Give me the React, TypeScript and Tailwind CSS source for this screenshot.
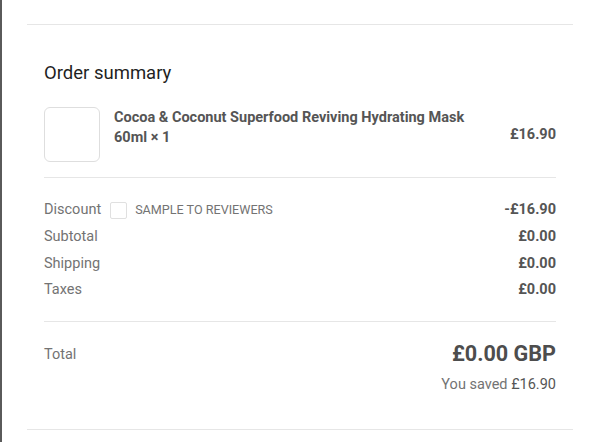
export default function App() {
  return (
    <div
      className="w-[600px] h-[442px] bg-white border-l-2 border-[#5a5a5a] overflow-hidden"
      style={{ fontFamily: "Roboto, 'Liberation Sans', sans-serif" }}
    >
      <div className="ml-[25px] mr-[27px] mt-[24px] border-t border-[#e6e6e6] border-b">
        <div className="px-[17px] pt-[36px] pb-[34px]">
          <h2 className="text-[18.5px] leading-6 text-[#1f1f1f]">Order summary</h2>

          <div className="mt-[22px] flex items-center gap-[14px] pb-[15px] border-b border-[#e6e6e6]">
            <div className="w-[56px] h-[55px] rounded-[6px] border border-[#dedede] bg-white shrink-0" />
            <div className="flex-1 self-start pt-px text-[14.5px] leading-5 font-bold text-[#555555]">
              <div>Cocoa &amp; Coconut Superfood Reviving Hydrating Mask</div>
              <div>60ml × 1</div>
            </div>
            <div className="text-[14.5px] font-bold text-[#555555]">£16.90</div>
          </div>

          <div className="pt-[22px] pb-[21px] flex flex-col gap-[6.8px] text-[14.5px] leading-5 border-b border-[#e6e6e6]">
            <div className="flex items-center">
              <span className="text-[#737373]">Discount</span>
              <span className="ml-[9px] w-[17px] h-[17px] border border-[#e0e0e0] rounded-[2px]" />
              <span className="ml-[8px] text-[12.6px] text-[#737373] uppercase">Sample to reviewers</span>
              <span className="ml-auto font-bold text-[#555555]">-£16.90</span>
            </div>
            <div className="flex">
              <span className="text-[#737373]">Subtotal</span>
              <span className="ml-auto font-bold text-[#555555]">£0.00</span>
            </div>
            <div className="flex">
              <span className="text-[#737373]">Shipping</span>
              <span className="ml-auto font-bold text-[#555555]">£0.00</span>
            </div>
            <div className="flex">
              <span className="text-[#737373]">Taxes</span>
              <span className="ml-auto font-bold text-[#555555]">£0.00</span>
            </div>
          </div>

          <div className="pt-[18px]">
            <div className="flex items-center">
              <span className="text-[14.5px] text-[#737373]">Total</span>
              <span className="ml-auto text-[21.6px] leading-7 font-bold text-[#4d4d4d]">£0.00 GBP</span>
            </div>
            <div className="mt-[7px] text-right text-[14.5px] leading-5 text-[#737373]">
              You saved <span className="text-[#555555]">£16.90</span>
            </div>
          </div>
        </div>
      </div>
    </div>
  );
}
